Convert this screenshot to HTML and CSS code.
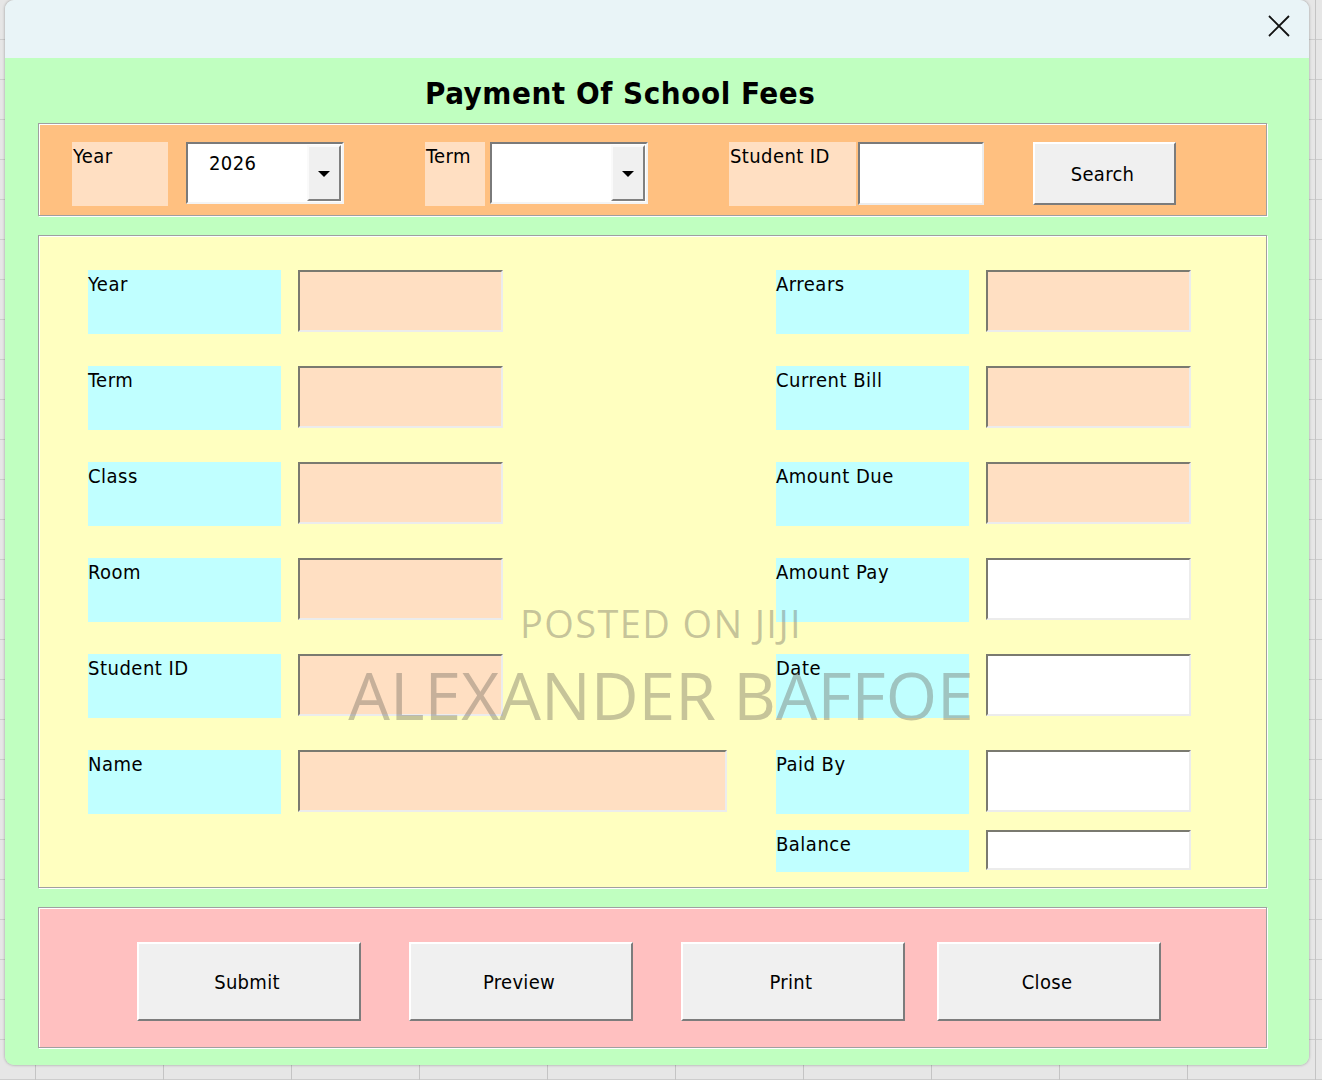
FILE: index.html
```html
<!DOCTYPE html>
<html>
<head>
<meta charset="utf-8">
<title>Payment Of School Fees</title>
<link rel="stylesheet" href="styles.css">
</head>
<body>
<div class="window">
  <div class="titlebar">
    <svg class="close-x" width="22" height="22" viewBox="0 0 22 22">
      <path d="M1 1 L21 21 M21 1 L1 21" stroke="#111" stroke-width="1.8" fill="none"/>
    </svg>
  </div>
  <div class="client">
    <h1 class="title">Payment Of School Fees</h1>

    <div class="panel search-panel">
      <div class="hlabel w-year">Year</div>
      <div class="combo g-18">
        <span class="combo-text">2026</span>
        <span class="combo-btn"><span class="tri"></span></span>
      </div>
      <div class="hlabel w-term g-81">Term</div>
      <div class="combo g-5">
        <span class="combo-text"></span>
        <span class="combo-btn"><span class="tri"></span></span>
      </div>
      <div class="hlabel w-sid g-81">Student ID</div>
      <div class="hinput g-2"></div>
      <div class="btn search-btn g-49">Search</div>
    </div>

    <div class="panel main-panel">
      <div class="col col-left">
        <div class="row"><div class="label">Year</div><div class="field peach"></div></div>
        <div class="row"><div class="label">Term</div><div class="field peach"></div></div>
        <div class="row"><div class="label">Class</div><div class="field peach"></div></div>
        <div class="row"><div class="label">Room</div><div class="field peach"></div></div>
        <div class="row"><div class="label">Student ID</div><div class="field peach"></div></div>
        <div class="row"><div class="label">Name</div><div class="field peach wide"></div></div>
      </div>
      <div class="col col-right">
        <div class="row"><div class="label">Arrears</div><div class="field peach"></div></div>
        <div class="row"><div class="label">Current Bill</div><div class="field peach"></div></div>
        <div class="row"><div class="label">Amount Due</div><div class="field peach"></div></div>
        <div class="row"><div class="label">Amount Pay</div><div class="field white"></div></div>
        <div class="row"><div class="label">Date</div><div class="field white"></div></div>
        <div class="row"><div class="label">Paid By</div><div class="field white"></div></div>
        <div class="row short"><div class="label">Balance</div><div class="field white"></div></div>
      </div>
      <div class="watermark">
        <div class="wm-small">POSTED ON JIJI</div>
        <div class="wm-big">ALEXANDER BAFFOE</div>
      </div>
    </div>

    <div class="panel button-panel">
      <div class="btn action">Submit</div>
      <div class="btn action">Preview</div>
      <div class="btn action">Print</div>
      <div class="btn action close-btn">Close</div>
    </div>
  </div>
</div>
</body>
</html>
```
FILE: styles.css
```css
* { box-sizing: border-box; }

html, body { margin: 0; padding: 0; }

body {
  width: 1322px;
  height: 1080px;
  overflow: hidden;
  background-color: #e6e6e6;
  background-image:
    repeating-linear-gradient(to right, transparent 0, transparent 35px, #c4c4c4 35px, #c4c4c4 36px, transparent 36px, transparent 128px),
    repeating-linear-gradient(to bottom, transparent 0, transparent 39px, #cdcdcd 39px, #cdcdcd 40px);
  font-family: "DejaVu Sans Condensed", "DejaVu Sans", sans-serif;
  color: #000;
}

.window {
  margin-left: 5px;
  width: 1304px;
  height: 1065px;
  border-radius: 9px;
  overflow: hidden;
  box-shadow: 0 0 3px rgba(0,0,0,0.35);
  display: flex;
  flex-direction: column;
}

.titlebar {
  height: 58px;
  background: #e9f4f7;
  display: flex;
  justify-content: flex-end;
  align-items: flex-start;
  padding: 15px 19px 0 0;
}

.close-x { display: block; }

.client {
  flex: 1;
  background: #c0ffc0;
  padding: 0 42px 0 33px;
}

.title {
  margin: 0;
  height: 65px;
  padding-left: 387px;
  padding-top: 16px;
  font-size: 31px;
  line-height: 38px;
  font-weight: bold;
  letter-spacing: 0.55px;
}

.panel {
  border: 1px solid #a0a0a0;
  box-shadow: inset 1px 1px 0 #ffffff, 1px 1px 0 #ffffff;
}

/* search panel */
.search-panel {
  height: 93px;
  background: #ffc080;
  display: flex;
  align-items: flex-start;
  padding: 18px 0 0 33px;
}

.hlabel {
  height: 64px;
  background: #ffdfc2;
  font-size: 20px;
  letter-spacing: 0.4px;
  line-height: 24px;
  padding: 2px 0 0 1px;
  white-space: nowrap;
}
.w-year { width: 96px; }
.w-term { width: 60px; }
.w-sid { width: 127px; }

.g-2 { margin-left: 2px; }
.g-5 { margin-left: 5px; }
.g-18 { margin-left: 18px; }
.g-49 { margin-left: 49px; }
.g-81 { margin-left: 81px; }

.combo {
  width: 158px;
  height: 62px;
  background: #fff;
  border: 2px solid;
  border-color: #7a7a7a #f4f4f4 #f4f4f4 #7a7a7a;
  display: flex;
  align-items: stretch;
}
.combo-text {
  flex: 1;
  font-size: 20px;
  letter-spacing: 0.4px;
  line-height: 24px;
  padding: 7px 0 0 21px;
}
.combo-btn {
  width: 34px;
  margin: 1px 1px 1px 0;
  background: #f0f0f0;
  border: 2px solid;
  border-color: #fafafa #808080 #808080 #fafafa;
  display: flex;
  align-items: center;
  justify-content: center;
}
.tri {
  width: 0;
  height: 0;
  border-left: 6px solid transparent;
  border-right: 6px solid transparent;
  border-top: 6px solid #000;
  margin-top: 2px;
}

.hinput {
  width: 126px;
  height: 63px;
  background: #fff;
  border: 2px solid;
  border-color: #7a7a7a #ececec #ececec #7a7a7a;
}

.btn {
  background: #f0f0f0;
  border: 2px solid;
  border-color: #ffffff #7c7c7c #7c7c7c #ffffff;
  display: flex;
  align-items: center;
  justify-content: center;
  font-size: 20px;
  letter-spacing: 0.3px;
  padding-right: 4px;
}
.search-btn {
  width: 143px;
  height: 63px;
}

/* main panel */
.main-panel {
  position: relative;
  margin-top: 19px;
  height: 653px;
  background: #ffffc0;
  display: flex;
  padding: 34px 0 0 49px;
}

.col {
  display: flex;
  flex-direction: column;
  gap: 32px;
}
.col-left { width: 639px; }
.col-right { margin-left: 49px; }

.row {
  display: flex;
  align-items: flex-start;
  gap: 17px;
  height: 64px;
}
.row.short {
  height: 42px;
  margin-top: -16px;
}

.label {
  width: 193px;
  height: 64px;
  background: #c0ffff;
  font-size: 20px;
  letter-spacing: 0.5px;
  line-height: 24px;
  padding: 2px 0 0 0;
  white-space: nowrap;
}
.row.short .label { height: 42px; }

.field {
  width: 205px;
  height: 62px;
  border: 2px solid;
  border-color: #7a7a70 #ececec #ececec #7a7a70;
}
.row.short .field { height: 40px; }
.field.wide { width: 429px; }
.peach { background: #ffdfc2; }
.white { background: #ffffff; }

.watermark {
  position: absolute;
  left: 302px;
  top: 362px;
  width: 640px;
  font-family: "Open Sans", "Noto Sans", sans-serif;
  color: rgba(104, 100, 90, 0.38);
  text-align: center;
  pointer-events: none;
}
.wm-small {
  font-size: 38px;
  letter-spacing: 1.4px;
  line-height: 50px;
}
.wm-big {
  font-size: 66px;
  line-height: 80px;
  margin-top: 6px;
  white-space: nowrap;
}

/* bottom panel */
.button-panel {
  margin-top: 19px;
  height: 141px;
  background: #ffc0c0;
  display: flex;
  align-items: flex-start;
  padding: 34px 0 0 98px;
  gap: 48px;
}
.action {
  width: 224px;
  height: 79px;
}
.close-btn { margin-left: -16px; }
```
